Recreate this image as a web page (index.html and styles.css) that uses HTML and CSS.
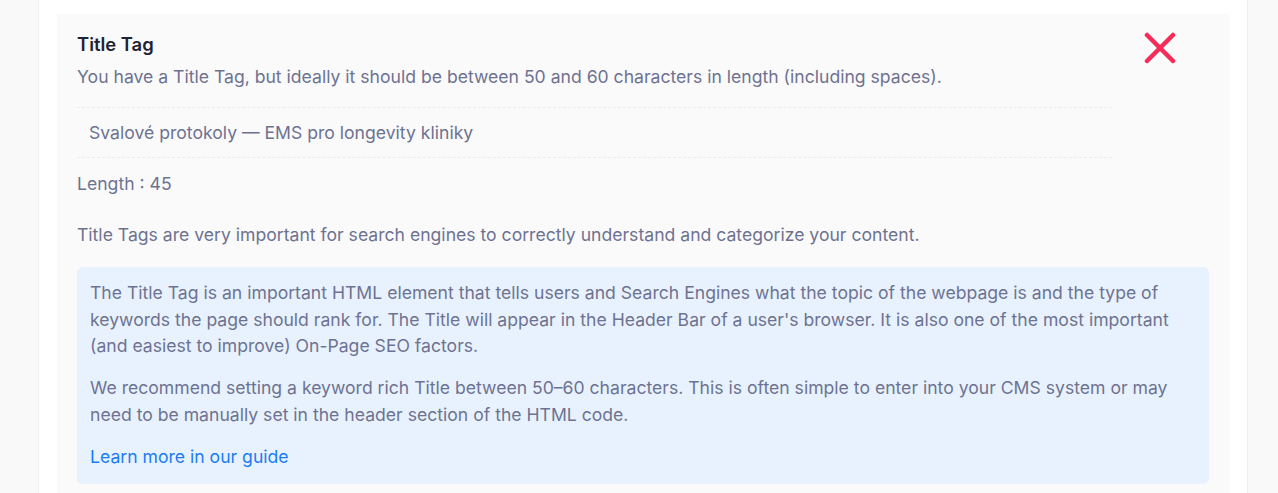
FILE: index.html
```html
<!DOCTYPE html>
<html>
<head>
    <title>Title Tag</title>
    <link rel="stylesheet" href="styles.css">
</head>
<body>
    <div class="page">
        <div class="report">
            <!-- Title tag check -->
            <div class="check">
                <div class="check-top">
                    <div class="check-main">
                        <h3 class="check-title">Title Tag</h3>
                        <p class="check-text">You have a Title Tag, but ideally it should be between 50 and 60 characters in length (including spaces).</p>
                        <div class="check-value">Svalové protokoly — EMS pro longevity kliniky</div>
                        <p class="check-length">Length : 45</p>
                    </div>
                    <div class="check-status">
                        <svg width="32" height="32" viewBox="0 0 32 32">
                            <path d="M3 3 L29 29 M29 3 L3 29" stroke="#f72a58" stroke-width="4.5" stroke-linecap="round" fill="none"/>
                        </svg>
                    </div>
                </div>
                <p class="check-note">Title Tags are very important for search engines to correctly understand and categorize your content.</p>
                <div class="info-box">
                    <p>The Title Tag is an important HTML element that tells users and Search Engines what the topic of the webpage is and the type of keywords the page should rank for. The Title will appear in the Header Bar of a user's browser. It is also one of the most important (and easiest to improve) On-Page SEO factors.</p>
                    <p>We recommend setting a keyword rich Title between 50–60 characters. This is often simple to enter into your CMS system or may need to be manually set in the header section of the HTML code.</p>
                    <a href="#" class="info-link">Learn more in our guide</a>
                </div>
            </div>
        </div>
    </div>
</body>
</html>
```

FILE: styles.css
```css
/* Reset some default styles */
body {
    margin: 0;
    padding: 0;
    font-family: Inter, "Noto Sans", Arial, sans-serif;
    font-size: 17.6px;
    background-color: #f9f9f9;
    color: #6e7291;
    overflow: hidden;
}

.page {
    height: 493px;
}

/* White report card */
.report {
    margin-left: 38px;
    width: 1210px;
    height: 100%;
    background-color: #fff;
    border-left: 1px solid #efefef;
    border-right: 1px solid #efefef;
    padding: 14px 18px 0 18px;
    box-sizing: border-box;
}

/* Single check panel */
.check {
    background-color: #fafafb;
    padding: 17px 20px 20px 20px;
    height: 100%;
    box-sizing: border-box;
}

.check-top {
    display: flex;
}

.check-main {
    flex: 1;
}

.check-status {
    width: 94px;
    margin-right: 2px;
    display: flex;
    justify-content: center;
    padding-top: 1px;
    padding-left: 1px;
}

.check-title {
    margin: 0 0 6px 0;
    font-size: 18.4px;
    line-height: 27px;
    font-weight: 600;
    color: #1d2333;
}

.check-text {
    margin: 0 0 17px 0;
    line-height: 26.4px;
}

.check-value {
    border-top: 1px dashed #ececee;
    border-bottom: 1px dashed #ececee;
    padding: 11.3px 12px;
    line-height: 26.4px;
}

.check-length {
    margin: 13px 0 0 0;
    line-height: 26.4px;
}

.check-note {
    margin: 24.6px 0 17.8px 0;
    line-height: 26.4px;
}

/* Blue info box */
.info-box {
    background-color: #e8f2ff;
    border-radius: 6px;
    padding: 13.8px 13px 12.8px 13px;
    line-height: 26.4px;
}

.info-box p {
    margin: 0 0 15.5px 0;
}

.info-link {
    display: block;
    margin-top: 16.5px;
    color: #1a7cf5;
    text-decoration: none;
}
```
